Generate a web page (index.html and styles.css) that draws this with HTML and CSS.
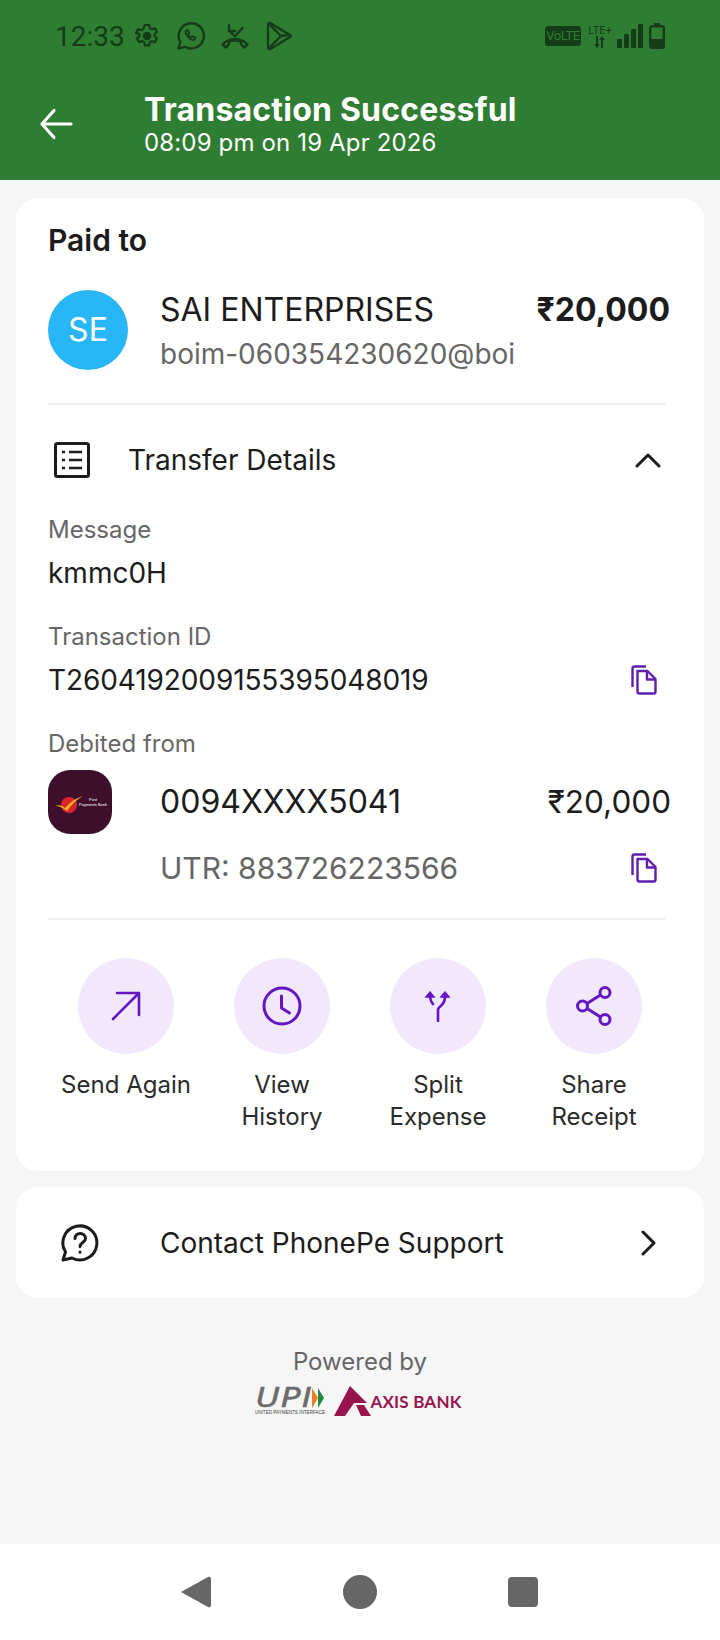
FILE: index.html
```html
<!DOCTYPE html>
<html lang="en">
<head>
  <meta charset="UTF-8" />
  <meta name="viewport" content="width=device-width, initial-scale=1" />
  <title>Transaction Successful</title>
  <link rel="stylesheet" href="styles.css">
</head>
<body>
  <!-- HEADER -->
  <header class="header">
    <div class="status-bar">
      <span class="status-time">12:33</span>
      <svg class="status-icon gear" width="26" height="26" viewBox="0 0 26 26" fill="none" stroke="#143d17" stroke-width="2.2" stroke-linejoin="round">
        <path d="M10.8 2h4.4l.6 3.2 2 1.1 3-1.1 2.2 3.8-2.4 2.100v2.200l2.400 2.100-2.200 3.800-3-1.100-2 1.100-.6 3.200h-4.400l-.6-3.200-2-1.100-3 1.100-2.200-3.800 2.400-2.100v-2.200L2 9.900l2.200-3.800 3 1.100 2-1.100z"/>
        <circle cx="13" cy="13" r="3.200" fill="#143d17"/>
      </svg>
      <svg class="status-icon whatsapp" width="30" height="30" viewBox="0 0 30 30" fill="none" stroke="#143d17" stroke-width="2.400" stroke-linejoin="round" stroke-linecap="round">
        <path d="M2.500 27.500l1.800-6.400A12.600 12.600 0 1 1 9 25.800z"/>
        <path d="M10.500 9.500c-1.500 1.500-.8 4 1.500 6.500s5 3.800 6.800 2.300l.8-1.400-3-1.700-1.200 1.100c-1.200-.5-2.700-2-3.200-3.300l1-1.200-1.400-3z" stroke-width="1.800"/>
      </svg>
      <svg class="status-icon missed" width="30" height="26" viewBox="0 0 30 26" fill="none" stroke="#143d17" stroke-width="2.400" stroke-linecap="round" stroke-linejoin="round">
        <path d="M9 2v6h6M9.500 8l5.500 5.500L22.500 5"/>
        <path d="M2.500 21.500c6-7 19-7 25 0l-3.500 3-3-3.500v-2.500c-4-1.300-8-1.300-12 0V21l-3 3.500z"/>
      </svg>
      <svg class="status-icon play" width="26" height="30" viewBox="0 0 26 30" fill="none" stroke="#143d17" stroke-width="2.400" stroke-linejoin="round">
        <path d="M2 3.500c0-1.500 1.500-2 2.500-1.400L24 14c.8.500.8 1.500 0 2L4.500 27.900C3.500 28.500 2 28 2 26.500z"/>
        <path d="M3 3l12 12L3 27M15 15l8-1"/>
      </svg>
      <span class="status-gap"></span>
      <span class="volte">VoLTE</span>
      <span class="lte">
        <span class="lte-text">LTE+</span>
        <svg width="14" height="12" viewBox="0 0 14 12" fill="#143d17"><path d="M3 0h2v8h2L4 12 1 8h2zM9 0l3 4h-2v8H8V4H6z"/></svg>
      </span>
      <span class="signal"><i class="bar-1"></i><i class="bar-2"></i><i class="bar-3"></i><i class="bar-4"></i></span>
      <svg class="battery" width="16" height="26" viewBox="0 0 16 26">
        <path d="M5 0h6v3H5z" fill="#143d17"/>
        <rect x="1.200" y="3.200" width="13.600" height="21.600" rx="2" fill="none" stroke="#143d17" stroke-width="2.400"/>
        <rect x="1" y="16" width="14" height="9" fill="#143d17"/>
      </svg>
    </div>
    <div class="app-bar">
      <svg class="back-arrow" width="34" height="32" viewBox="0 0 34 32" fill="none" stroke="#fff" stroke-width="3.200" stroke-linecap="round" stroke-linejoin="round">
        <path d="M32 16H3M15 2.500L3 16l12 13.500"/>
      </svg>
      <div>
        <h1 class="title">Transaction Successful</h1>
        <p class="subtitle">08:09 pm on 19 Apr 2026</p>
      </div>
    </div>
  </header>

  <main class="content">
    <!-- PAYMENT CARD -->
    <section class="card">
      <h2 class="paid-to">Paid to</h2>
      <div class="payee">
        <div class="avatar">SE</div>
        <div class="payee-info">
          <div class="line-between">
            <span class="text-large">SAI ENTERPRISES</span>
            <span class="amount-bold">₹20,000</span>
          </div>
          <div class="text-handle">boim-060354230620@boi</div>
        </div>
      </div>
      <div class="divider divider-top"></div>

      <div class="transfer-head">
        <svg class="list-icon" width="36" height="36" viewBox="0 0 36 36" fill="none" stroke="#1c1c1c" stroke-width="3">
          <rect x="1.500" y="1.500" width="33" height="33" rx="2"/>
          <path d="M15 10h13M15 18h13M15 26h13" stroke-width="2.600"/>
          <path d="M8 10h3M8 18h3M8 26h3" stroke-width="2.600"/>
        </svg>
        <span class="text-main transfer-title">Transfer Details</span>
        <svg width="26" height="16" viewBox="0 0 26 16" fill="none" stroke="#1c1c1c" stroke-width="3" stroke-linecap="round" stroke-linejoin="round">
          <path d="M2 14L13 3l11 11"/>
        </svg>
      </div>

      <div class="detail first-detail">
        <div class="label">Message</div>
        <div class="text-main value">kmmc0H</div>
      </div>
      <div class="detail">
        <div class="label">Transaction ID</div>
        <div class="line-between value">
          <span class="text-main txn-id">T2604192009155395048019</span>
          <svg class="copy" width="26" height="30" viewBox="0 0 26 30" fill="none" stroke="#5e1fae" stroke-width="2.400" stroke-linejoin="round">
            <path d="M15 1.500H3.500C2 1.500 1.500 2.500 1.500 3.500V22"/>
            <path d="M6.500 6h10l8 8v12.500c0 1.200-.8 2-2 2h-14c-1.200 0-2-.8-2-2z"/>
            <path d="M16 6v8.500h8.500"/>
          </svg>
        </div>
      </div>
      <div class="detail">
        <div class="label">Debited from</div>
      </div>
      <div class="bank-row">
        <div class="bank-logo">
          <svg width="64" height="64" viewBox="0 0 64 64">
            <circle cx="21" cy="35" r="8" fill="#d8262c"/>
            <path d="M7 36c4-1.500 7-.5 10 2 5-6 11-10 18-12-7 4-12 9-16 15-4-3-7-5-12-5z" fill="#eeb01f"/>
            <text x="41" y="31" class="bank-text">Post</text>
            <text x="31" y="36" class="bank-text">Payments Bank</text>
          </svg>
        </div>
        <div class="bank-info">
          <div class="line-between">
            <span class="text-large">0094XXXX5041</span>
            <span class="text-large bank-amount">₹20,000</span>
          </div>
          <div class="line-between utr">
            <span class="text-sub">UTR: 883726223566</span>
            <svg class="copy-low" width="26" height="30" viewBox="0 0 26 30" fill="none" stroke="#5e1fae" stroke-width="2.400" stroke-linejoin="round">
              <path d="M15 1.500H3.500C2 1.500 1.500 2.500 1.500 3.500V22"/>
              <path d="M6.500 6h10l8 8v12.500c0 1.200-.8 2-2 2h-14c-1.200 0-2-.8-2-2z"/>
              <path d="M16 6v8.500h8.500"/>
            </svg>
          </div>
        </div>
      </div>
      <div class="divider divider-bottom"></div>

      <div class="actions">
        <div class="action">
          <div class="action-circle">
            <svg width="30" height="30" viewBox="0 0 30 30" fill="none" stroke="#6516c4" stroke-width="2.600" stroke-linecap="round" stroke-linejoin="round">
              <path d="M2 28L28 2M6 2h22v22"/>
            </svg>
          </div>
          <div class="action-label">Send Again</div>
        </div>
        <div class="action">
          <div class="action-circle">
            <svg width="40" height="40" viewBox="0 0 40 40" fill="none" stroke="#6516c4" stroke-width="3" stroke-linecap="round" stroke-linejoin="round">
              <circle cx="20" cy="20" r="18"/>
              <path d="M19.500 10v12l8 5"/>
            </svg>
          </div>
          <div class="action-label">View History</div>
        </div>
        <div class="action">
          <div class="action-circle">
            <svg width="28" height="32" viewBox="0 0 28 32" fill="none" stroke="#6516c4" stroke-width="2.600" stroke-linecap="round">
              <path d="M14 31V20c0-4 7-4 7-13V4M9 14C7 12 6 10 6 4"/>
              <path d="M1.500 7L6 1.500 10.500 7zM16.500 7L21 1.500 25.500 7z" fill="#6516c4" stroke-width="1"/>
            </svg>
          </div>
          <div class="action-label">Split Expense</div>
        </div>
        <div class="action">
          <div class="action-circle">
            <svg width="36" height="40" viewBox="0 0 36 40" fill="none" stroke="#6516c4" stroke-width="3">
              <circle cx="6.500" cy="20" r="5"/>
              <circle cx="29" cy="6.500" r="5"/>
              <circle cx="29" cy="33.500" r="5"/>
              <path d="M11 17.500L24.500 9M11 22.500l13.500 8.500"/>
            </svg>
          </div>
          <div class="action-label">Share Receipt</div>
        </div>
      </div>
    </section>

    <!-- SUPPORT CARD -->
    <section class="card support">
      <svg class="help-icon" width="38" height="38" viewBox="0 0 38 38" fill="none" stroke="#1c1c1c" stroke-width="3" stroke-linecap="round" stroke-linejoin="round">
        <path d="M2 36l2.500-8A17 17 0 1 1 11 34z"/>
        <path d="M14 14.500c0-7 10.500-6.500 10.500 0 0 4-5.500 4-5.500 8"/>
        <path d="M19 28v.2"/>
      </svg>
      <span class="text-main support-text">Contact PhonePe Support</span>
      <svg width="16" height="26" viewBox="0 0 16 26" fill="none" stroke="#1c1c1c" stroke-width="3" stroke-linecap="round" stroke-linejoin="round">
        <path d="M3 2l11 11L3 24"/>
      </svg>
    </section>

    <!-- POWERED BY -->
    <div class="powered">
      <div class="powered-label">Powered by</div>
      <div class="logos">
        <div class="upi">
          <div class="upi-mark">
            <span class="upi-text">UPI</span>
            <svg width="14" height="20" viewBox="0 0 14 20"><path d="M1 0l6 10-6 10z" fill="#ee7d1f"/><path d="M7 0l6 10-6 10z" fill="#1d8a45"/></svg>
          </div>
          <div class="upi-small">UNITED PAYMENTS INTERFACE</div>
        </div>
        <svg class="axis-mark" width="38" height="30" viewBox="0 0 38 30" fill="#97144d">
          <path d="M16 0l17 17H20L11 30H0z"/>
          <path d="M22 19h8l7 11H27z"/>
        </svg>
        <span class="axis-text">AXIS BANK</span>
      </div>
    </div>
  </main>

  <!-- NAV BAR -->
  <nav class="nav-bar">
    <svg width="32" height="34" viewBox="0 0 32 34"><path d="M1 17L28 2c1.500-.8 3 0 3 2v26c0 2-1.500 2.800-3 2z" fill="#666"/></svg>
    <span class="nav-circle"></span>
    <span class="nav-square"></span>
  </nav>
</body>
</html>
```

FILE: styles.css
```css
* {
  box-sizing: border-box;
}

body {
  margin: 0;
  height: 1640px;
  display: flex;
  flex-direction: column;
  font-family: "Inter", sans-serif;
  background: #f6f6f6;
  color: #1c1c1c;
}

h1, h2, p {
  margin: 0;
}

/* header */
.header {
  height: 180px;
  background: #2e7d32;
  color: #fff;
}

.status-bar {
  height: 72px;
  display: flex;
  align-items: center;
  padding: 0 55px 0 55px;
  color: #143d17;
}

.status-time {
  font-family: "Roboto", sans-serif;
  font-size: 28px;
  width: 80px;
}

.status-icon {
  flex: none;
}

.gear { margin-right: 16px; margin-left: -1px; }
.whatsapp { margin-right: 14px; }
.missed { margin-right: 16px; }

.status-gap {
  flex: 1;
}

.volte {
  width: 36px;
  height: 20px;
  background: #143d17;
  border-radius: 3px;
  color: #2e7d32;
  font-family: "Roboto", sans-serif;
  font-size: 13px;
  line-height: 20px;
  text-align: center;
  letter-spacing: -0.5px;
}

.lte {
  width: 28px;
  margin: 0 1px 0 5px;
  display: flex;
  flex-direction: column;
  align-items: center;
}

.lte-text {
  font-family: "Roboto", sans-serif;
  font-size: 11px;
  line-height: 11px;
}

.signal {
  display: flex;
  align-items: flex-end;
  gap: 2px;
  height: 24px;
  margin: 0 0 0 2px;
}

.signal i {
  width: 5px;
  background: #143d17;
  border-radius: 1px;
}

.bar-1 { height: 9px; }
.bar-2 { height: 14px; }
.bar-3 { height: 19px; }
.bar-4 { height: 24px; }

.battery {
  margin-left: 6px;
}

.app-bar {
  height: 104px;
  display: flex;
  align-items: center;
  padding-left: 39px;
}

.back-arrow {
  margin-right: 71px;
}

.title {
  font-size: 32px;
  line-height: 38px;
  font-weight: 700;
  letter-spacing: 0.2px;
}

.subtitle {
  font-size: 24px;
  line-height: 28px;
  letter-spacing: 0.15px;
}

/* cards */
.content {
  flex: 1;
  padding: 18px 16px 0;
}

.card {
  background: #fff;
  border-radius: 22px;
  padding: 24px 32px 38px;
}

.paid-to {
  font-size: 30px;
  line-height: 36px;
  font-weight: 600;
}

.payee {
  display: flex;
  margin-top: 32px;
}

.avatar {
  width: 80px;
  height: 80px;
  flex: none;
  border-radius: 50%;
  background: #29b6f6;
  color: #fff;
  font-size: 32px;
  line-height: 80px;
  text-align: center;
}

.payee-info {
  flex: 1;
  margin-left: 32px;
  margin-right: 2px;
  padding-top: 2px;
}

.line-between {
  display: flex;
  justify-content: space-between;
  align-items: center;
}

.text-main {
  font-size: 28px;
  line-height: 36px;
}

.text-large {
  font-size: 32px;
  line-height: 36px;
}

.txn-id {
  letter-spacing: -0.1px;
}

.bank-amount {
  font-size: 31.5px;
}

.text-handle {
  margin-top: 8px;
  font-size: 28px;
  line-height: 36px;
  color: #666;
}

.text-sub {
  font-size: 30px;
  line-height: 36px;
  color: #666;
}

.amount-bold {
  font-size: 32px;
  line-height: 36px;
  font-weight: 700;
}

.divider {
  height: 2px;
  background: #eee;
  margin-right: 7px;
}

.divider-top {
  margin-top: 31px;
}

.divider-bottom {
  margin-top: 32px;
}

.transfer-head {
  display: flex;
  align-items: center;
  height: 56px;
  margin-top: 27px;
  padding-left: 6px;
  padding-right: 11px;
}

.transfer-title {
  flex: 1;
  margin-left: 38px;
}

.detail {
  margin-top: 30px;
}

.first-detail {
  margin-top: 26px;
}

.label {
  font-size: 24px;
  line-height: 32px;
  color: #666;
}

.value {
  margin-top: 9px;
}

.copy {
  margin-right: 15px;
}

.copy-low {
  margin-right: 14px;
}

.bank-row {
  display: flex;
  margin-top: 10px;
}

.bank-logo {
  width: 64px;
  height: 64px;
  flex: none;
  border-radius: 22px;
  background: #3e0f2a;
}

.bank-text {
  font-family: "Liberation Sans", sans-serif;
  font-size: 4px;
  fill: #fff;
}

.bank-info {
  flex: 1;
  margin-left: 48px;
  margin-right: 1px;
  padding-top: 14px;
}

.utr {
  margin-top: 30px;
}

.actions {
  display: grid;
  grid-template-columns: repeat(4, 1fr);
  margin-top: 38px;
}

.action {
  display: flex;
  flex-direction: column;
  align-items: center;
}

.action-circle {
  width: 96px;
  height: 96px;
  border-radius: 50%;
  background: #f1e8fb;
  display: flex;
  align-items: center;
  justify-content: center;
}

.action-label {
  margin-top: 15px;
  width: 130px;
  font-size: 24px;
  line-height: 32px;
  text-align: center;
  color: #2b2b2b;
}

.support {
  display: flex;
  align-items: center;
  height: 111px;
  margin-top: 16px;
  padding: 0 48px 0 45px;
}

.support-text {
  flex: 1;
  margin-left: 61px;
}

/* powered by */
.powered {
  margin-top: 48px;
  text-align: center;
}

.powered-label {
  font-size: 24px;
  line-height: 32px;
  color: #666;
}

.logos {
  display: flex;
  justify-content: center;
  align-items: center;
  margin-top: 6px;
  height: 34px;
  padding-right: 4px;
}

.upi {
  width: 71px;
  margin-right: 9px;
}

.upi-mark {
  display: flex;
  align-items: center;
  justify-content: space-between;
  height: 23px;
  padding-left: 2px;
}

.upi-text {
  font-family: "DejaVu Sans", sans-serif;
  font-size: 26px;
  line-height: 23px;
  font-style: italic;
  color: #6b6b6b;
  letter-spacing: 1px;
  -webkit-text-stroke: 0.5px #6b6b6b;
  transform: scaleX(1.25);
  transform-origin: left center;
}

.upi-small {
  font-family: "Liberation Sans", sans-serif;
  font-size: 4.6px;
  line-height: 6px;
  white-space: nowrap;
  color: #444;
}

.axis-text {
  margin-left: -2px;
  font-family: "Lato", sans-serif;
  font-size: 17px;
  font-weight: 700;
  color: #97144d;
  white-space: nowrap;
  letter-spacing: 0.2px;
}

/* nav */
.nav-bar {
  height: 96px;
  background: #fff;
  display: flex;
  align-items: center;
  justify-content: center;
  gap: 131px;
  padding-right: 2px;
}

.nav-circle {
  width: 34px;
  height: 34px;
  border-radius: 50%;
  background: #666;
}

.nav-square {
  width: 30px;
  height: 30px;
  border-radius: 4px;
  background: #666;
}
```
